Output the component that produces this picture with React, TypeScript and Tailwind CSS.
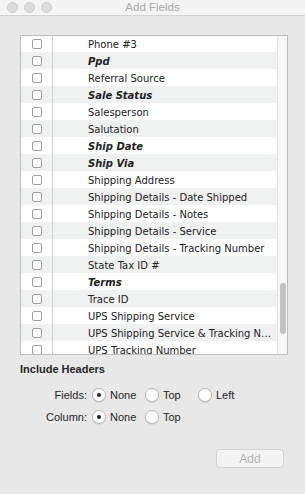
import React from "react";

interface Field {
  name: string;
  custom?: boolean;
}

const fields: Field[] = [
  { name: "Phone #3" },
  { name: "Ppd", custom: true },
  { name: "Referral Source" },
  { name: "Sale Status", custom: true },
  { name: "Salesperson" },
  { name: "Salutation" },
  { name: "Ship Date", custom: true },
  { name: "Ship Via", custom: true },
  { name: "Shipping Address" },
  { name: "Shipping Details - Date Shipped" },
  { name: "Shipping Details - Notes" },
  { name: "Shipping Details - Service" },
  { name: "Shipping Details - Tracking Number" },
  { name: "State Tax ID #" },
  { name: "Terms", custom: true },
  { name: "Trace ID" },
  { name: "UPS Shipping Service" },
  { name: "UPS Shipping Service & Tracking Number" },
  { name: "UPS Tracking Number" },
];

function Radio({ label, checked }: { label: string; checked?: boolean }) {
  return (
    <div className="w-[53px] flex items-center gap-[4px]">
      <span className="w-[14px] h-[14px] rounded-full bg-white border border-[#b5b5b5] shadow-[0_1px_1px_rgba(0,0,0,0.08)] flex items-center justify-center shrink-0">
        {checked && <span className="w-[4px] h-[4px] rounded-full bg-[#222]" />}
      </span>
      <span>{label}</span>
    </div>
  );
}

export default function App() {
  return (
    <div className="w-[305px] h-[494px] bg-[#e8e8e8] flex flex-col overflow-hidden font-['Liberation_Sans',Arial,sans-serif] text-[#262626]">
      {/* title bar */}
      <div className="relative h-[16px] bg-[#f4f4f4] border-b border-[#d3d3d3] flex items-center pl-[7px] gap-[6px]">
        <span className="w-[11px] h-[11px] rounded-full bg-[#dcdcdc] border border-[#cdcdcd]" />
        <span className="w-[11px] h-[11px] rounded-full bg-[#dcdcdc] border border-[#cdcdcd]" />
        <span className="w-[11px] h-[11px] rounded-full bg-[#dcdcdc] border border-[#cdcdcd]" />
        <span className="absolute inset-0 flex items-center justify-center text-[11.5px] text-[#a9a9a9]">
          Add Fields
        </span>
      </div>

      {/* field list */}
      <div className="ml-[20px] mt-[19px] w-[268px] h-[320px] border border-[#bdbdbd] bg-white flex overflow-hidden">
        <div className="flex-1 overflow-hidden">
          <div className="-mt-px font-['DejaVu_Sans',Verdana,sans-serif] text-[10px] text-[#222]">
            {fields.map((f, i) => (
              <div
                key={f.name}
                className={`h-[17px] flex items-center ${i % 2 === 1 ? "bg-[#f0f1f1]" : "bg-white"}`}
              >
                <div className="w-[32px] h-full border-r border-[#cfcfcf] flex items-center pl-[11px]">
                  <span className="w-[10px] h-[10px] rounded-[2px] border border-[#a0a0a0] bg-white" />
                </div>
                <div
                  className={`flex-1 min-w-0 pl-[35px] pr-[5px] pt-px truncate ${f.custom ? "font-bold italic" : ""}`}
                >
                  {f.name}
                </div>
              </div>
            ))}
          </div>
        </div>
        <div className="w-[10px] border-l border-[#e3e3e3] bg-[#f8f8f8] flex flex-col items-center">
          <div className="mt-[247px] w-[6px] h-[51px] rounded-full bg-[#c2c2c2]" />
        </div>
      </div>

      {/* include headers */}
      <div className="ml-[20px] mt-[7px] text-[11px] leading-[14px] font-bold text-[#262626]">Include Headers</div>

      <div className="mt-[12px] grid grid-cols-[92px_auto] gap-y-[8px] items-center text-[11px] leading-[14px]">
        <div className="text-right pr-[5px]">Fields:</div>
        <div className="flex items-center">
          <Radio label="None" checked />
          <Radio label="Top" />
          <Radio label="Left" />
        </div>
        <div className="text-right pr-[5px]">Column:</div>
        <div className="flex items-center">
          <Radio label="None" checked />
          <Radio label="Top" />
        </div>
      </div>

      <div className="mt-auto mb-[26px] mr-[21px] flex justify-end">
        <button
          disabled
          className="w-[68px] h-[19px] rounded-[4px] border border-[#d2d2d2] bg-[#f3f3f3] text-[12px] text-[#b3b3b3]"
        >
          Add
        </button>
      </div>
    </div>
  );
}
